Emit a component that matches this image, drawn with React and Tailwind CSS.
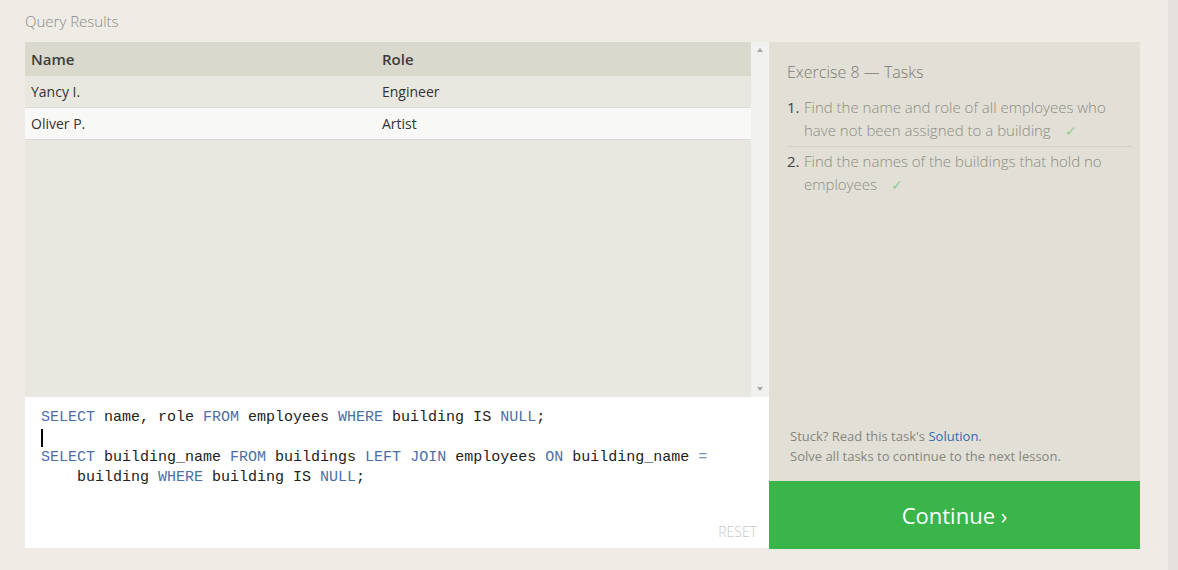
const kw = "text-[#4b6fa6]";

function Code() {
  return (
    <div className="font-['Liberation_Mono',monospace] text-[15px] leading-[20px] text-[#222] whitespace-pre">
      <div>
        <span className={kw}>SELECT</span> name, role <span className={kw}>FROM</span> employees{" "}
        <span className={kw}>WHERE</span> building IS <span className={kw}>NULL</span>;
      </div>
      <div className="h-[20px] flex items-center">
        <span className="block w-[2px] h-[18px] bg-black" />
      </div>
      <div>
        <span className={kw}>SELECT</span> building_name <span className={kw}>FROM</span> buildings{" "}
        <span className={kw}>LEFT</span> <span className={kw}>JOIN</span> employees{" "}
        <span className={kw}>ON</span> building_name <span className="text-[#7a92c0]">=</span>
      </div>
      <div>
        {"    "}building <span className={kw}>WHERE</span> building IS <span className={kw}>NULL</span>;
      </div>
    </div>
  );
}

function Check() {
  return <span className="ml-[14px] text-[#8fca8f] text-[14px] leading-[16px]">✓</span>;
}

export default function App() {
  const rows = [
    { name: "Yancy I.", role: "Engineer", bg: "bg-[#e9e8e0]" },
    { name: "Oliver P.", role: "Artist", bg: "bg-[#f8f8f7]" },
  ];

  return (
    <div className="w-full h-[570px] flex bg-[#efece6] font-['Open_Sans',sans-serif] overflow-hidden">
      <div className="flex-1 pl-[25px]">
        {/* Header */}
        <div className="h-[42px] pt-[10px] text-[15px] font-light text-[#8a8a85]">Query Results</div>

        <div className="flex">
          {/* Left column */}
          <div className="w-[744px] flex flex-col">
            <div className="h-[355px] flex bg-[#e9e8e0]">
              <div className="w-[726px]">
                <div className="h-[34px] flex items-center bg-[#dad9cd] text-[15px] font-semibold text-[#3d3d3a]">
                  <div className="w-[357px] pl-[6px]">Name</div>
                  <div>Role</div>
                </div>
                {rows.map((r) => (
                  <div
                    key={r.name}
                    className={`h-[32px] flex items-center border-b border-[#dcdbd3] text-[14px] text-[#333] ${r.bg}`}
                  >
                    <div className="w-[357px] pl-[6px]">{r.name}</div>
                    <div>{r.role}</div>
                  </div>
                ))}
              </div>
              {/* Scrollbar */}
              <div className="w-[18px] bg-[#f1f1ef] flex flex-col items-center justify-between py-[6px]">
                <div className="w-0 h-0 border-l-[3px] border-r-[3px] border-b-[4px] border-l-transparent border-r-transparent border-b-[#a8a8a8]" />
                <div className="w-0 h-0 border-l-[3px] border-r-[3px] border-t-[4px] border-l-transparent border-r-transparent border-t-[#a8a8a8]" />
              </div>
            </div>

            {/* Editor */}
            <div className="h-[151px] bg-white flex flex-col pl-[16px] pt-[11px] pr-[12px] pb-[6px]">
              <Code />
              <div className="mt-auto self-end text-[14px] font-light text-[#c8c8c4]">RESET</div>
            </div>
          </div>

          {/* Right panel */}
          <div className="w-[371px] flex flex-col">
            <div className="h-[439px] bg-[#e2e0d6] flex flex-col pl-[18px] pr-[8px] pt-[18px] pb-[15px]">
              <div className="text-[16px] font-light text-[#7a7a75]">Exercise 8 — Tasks</div>
              <ol className="mt-[12px] text-[15px] font-light text-[#8c8c86] leading-[23px]">
                <li className="flex border-b border-[#d3d1c6] pb-[4px]">
                  <span className="w-[17px] shrink-0 text-[#444] font-normal">1.</span>
                  <span>
                    Find the name and role of all employees who have not been assigned to a building
                    <Check />
                  </span>
                </li>
                <li className="flex pt-[3px]">
                  <span className="w-[17px] shrink-0 text-[#444] font-normal">2.</span>
                  <span>
                    Find the names of the buildings that hold no employees
                    <Check />
                  </span>
                </li>
              </ol>
              <div className="mt-auto pl-[3px] text-[13px] leading-[20px] text-[#85857f]">
                <div>
                  Stuck? Read this task's <span className="text-[#2e6db4]">Solution</span>.
                </div>
                <div>Solve all tasks to continue to the next lesson.</div>
              </div>
            </div>
            <div className="h-[68px] bg-[#3ab54a] flex items-center justify-center text-white text-[22px]">
              Continue ›
            </div>
          </div>
        </div>
      </div>
      <div className="w-[10px] bg-[#e3e0dd]" />
    </div>
  );
}
